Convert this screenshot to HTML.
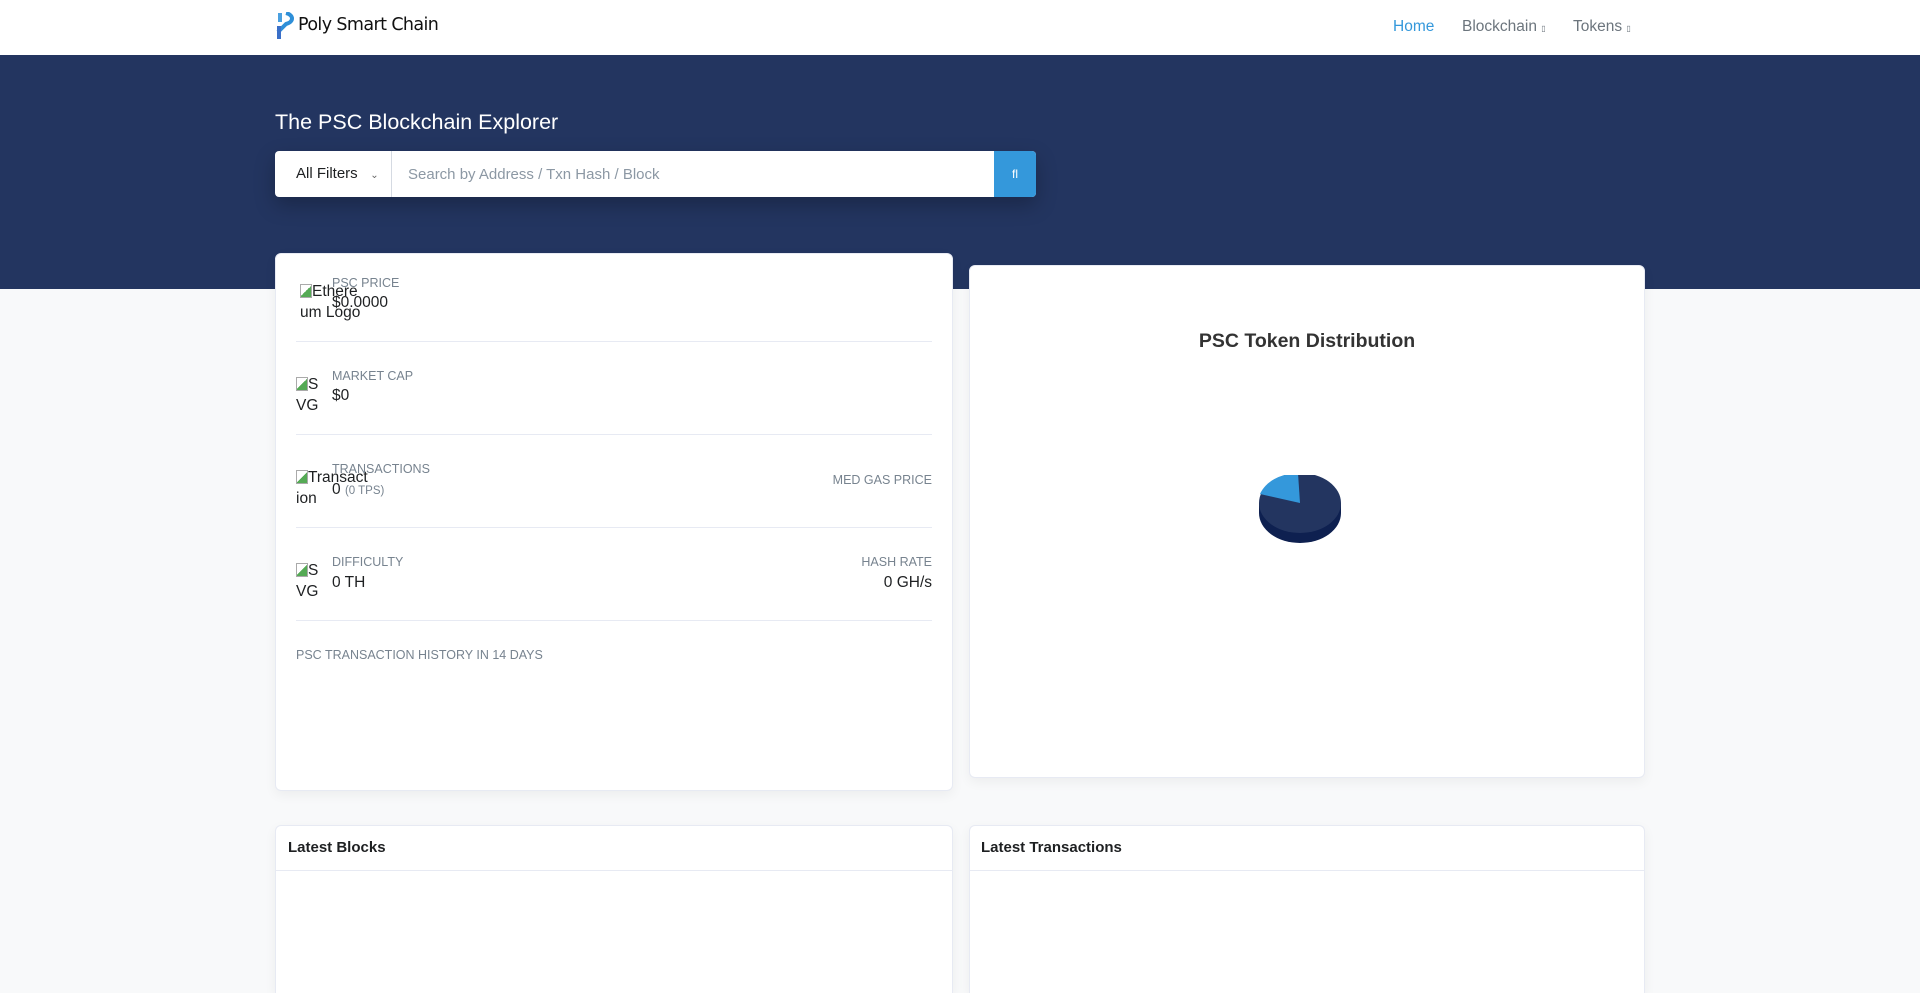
<!DOCTYPE html>
<html style="overflow:hidden;height:993px"><head><meta charset="utf-8"><style>
*{box-sizing:border-box;margin:0;padding:0}
body{width:1920px;height:993px;overflow:hidden;background:#f8f9fa;font-family:"Liberation Sans",sans-serif;position:relative}
.nav{position:absolute;left:0;top:0;width:1920px;height:55px;background:#fff}
.hero{position:absolute;left:0;top:55px;width:1920px;height:234px;background:#233560}
.abs{position:absolute}
.card{position:absolute;background:#fff;border:1px solid #e7eaf3;border-radius:6px;box-shadow:0 4px 12px rgba(0,0,0,.05)}
.lbl{font-size:12.5px;color:#77838f}
.val{font-size:15.5px;color:#1e2022}
.sep{position:absolute;left:296px;width:636px;height:1px;background:#e7eaf3}
.broken{font-size:15.5px;color:#1e2022;line-height:21px;word-break:break-all}
.bi{display:inline-block;width:12px;height:14px;border:1px solid #aaa;background:linear-gradient(135deg,#fff 50%,#5a5 50%);vertical-align:-2px}
.nl{font-size:15.5px;color:#6c757d}
</style></head><body>
<div class="nav"></div>
<svg class="abs" style="left:274px;top:12px" width="22" height="28" viewBox="0 0 22 28"><path d="M6 1v9" stroke="#4aa0e0" stroke-width="4"/><path d="M12 1c8 2 8 9 0 11L4 20" stroke="#2e8fd8" stroke-width="4" fill="none"/><path d="M5 14v13" stroke="#3a6fc8" stroke-width="4"/></svg>
<div class="abs" style="left:298px;top:15px;font-size:17.5px;color:#111;font-family:'DejaVu Sans',sans-serif;letter-spacing:-0.6px">Poly Smart Chain</div>
<div class="abs nl" style="left:1393px;top:18px;color:#3498db">Home</div>
<div class="abs nl" style="left:1462px;top:18px">Blockchain <span style="font-size:8px">▯</span></div>
<div class="abs nl" style="left:1573px;top:18px">Tokens <span style="font-size:8px">▯</span></div>
<div class="hero"></div>
<div class="abs" style="left:275px;top:110px;font-size:21.5px;color:#fff">The PSC Blockchain Explorer</div>
<div class="abs" style="left:275px;top:151px;width:761px;height:46px;background:#fff;border-radius:4px;box-shadow:0 8px 20px rgba(0,0,0,.25)"></div>
<div class="abs" style="left:275px;top:151px;width:117px;height:46px;border-right:1px solid #d5dae2;font-size:15px;color:#1e2022;padding:14px 0 0 21px">All Filters &nbsp; <span style="font-size:10px;color:#666">⌄</span></div>
<div class="abs" style="left:408px;top:166px;font-size:15px;color:#8c98a4">Search by Address / Txn Hash / Block</div>
<div class="abs" style="left:994px;top:151px;width:42px;height:46px;background:#3498db;border-radius:0 4px 4px 0;color:#fff;font-size:12px;text-align:center;line-height:46px">fl</div>

<div class="card" style="left:275px;top:253px;width:678px;height:538px"></div>
<div class="abs broken" style="left:300px;top:281px;width:62px"><span class="bi"></span>Ethere um Logo</div>
<div class="abs lbl" style="left:332px;top:276px">PSC PRICE</div>
<div class="abs val" style="left:332px;top:294px">$0.0000</div>
<div class="sep" style="top:341px"></div>
<div class="abs broken" style="left:296px;top:374px;width:30px"><span class="bi"></span>S VG</div>
<div class="abs lbl" style="left:332px;top:369px">MARKET CAP</div>
<div class="abs val" style="left:332px;top:387px">$0</div>
<div class="sep" style="top:434px"></div>
<div class="abs broken" style="left:296px;top:467px;width:72px"><span class="bi"></span>Transact ion</div>
<div class="abs lbl" style="left:332px;top:462px">TRANSACTIONS</div>
<div class="abs val" style="left:332px;top:481px">0 <span style="font-size:11.5px;color:#77838f">(0 TPS)</span></div>
<div class="abs lbl" style="left:700px;top:473px;width:232px;text-align:right">MED GAS PRICE</div>
<div class="sep" style="top:527px"></div>
<div class="abs broken" style="left:296px;top:560px;width:30px"><span class="bi"></span>S VG</div>
<div class="abs lbl" style="left:332px;top:555px">DIFFICULTY</div>
<div class="abs val" style="left:332px;top:574px">0 TH</div>
<div class="abs lbl" style="left:700px;top:555px;width:232px;text-align:right">HASH RATE</div>
<div class="abs val" style="left:700px;top:574px;width:232px;text-align:right">0 GH/s</div>
<div class="sep" style="top:620px"></div>
<div class="abs lbl" style="left:296px;top:648px">PSC TRANSACTION HISTORY IN 14 DAYS</div>

<div class="card" style="left:969px;top:265px;width:676px;height:513px"></div>
<div class="abs" style="left:969px;top:330px;width:676px;text-align:center;font-size:19.5px;font-weight:bold;color:#333">PSC Token Distribution</div>
<svg class="abs" style="left:1250px;top:475px" width="100" height="80" viewBox="0 0 100 80">
<ellipse cx="50" cy="38" rx="41" ry="30" fill="#0e2050"/>
<rect x="9" y="28" width="82" height="10" fill="#0e2050"/>
<ellipse cx="50" cy="28" rx="41" ry="30" fill="#233560"/>
<path d="M50 28L48 -2A41 30 0 0 0 10 19Z" fill="#3498db"/>
</svg>

<div class="card" style="left:275px;top:825px;width:678px;height:168px;border-bottom:none;border-radius:6px 6px 0 0"></div>
<div class="abs" style="left:276px;top:870px;width:676px;height:1px;background:#e7eaf3"></div>
<div class="abs" style="left:288px;top:839px;font-size:15px;font-weight:bold;color:#1e2022">Latest Blocks</div>
<div class="card" style="left:969px;top:825px;width:676px;height:168px;border-bottom:none;border-radius:6px 6px 0 0"></div>
<div class="abs" style="left:970px;top:870px;width:674px;height:1px;background:#e7eaf3"></div>
<div class="abs" style="left:981px;top:839px;font-size:15px;font-weight:bold;color:#1e2022">Latest Transactions</div>
</body></html>
